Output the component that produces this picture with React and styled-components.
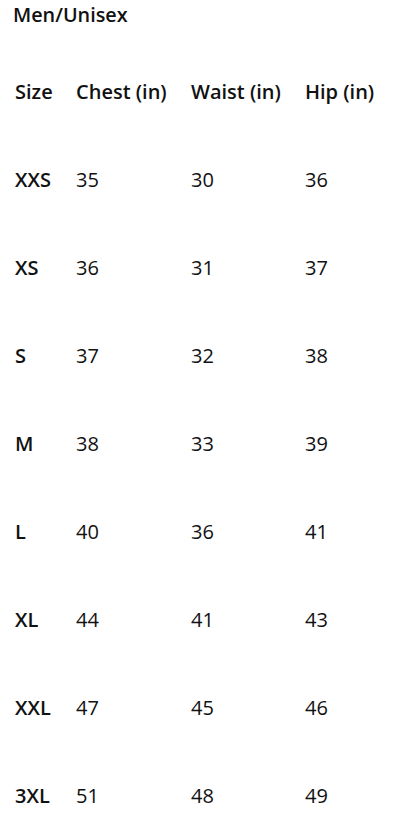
import styled, { createGlobalStyle } from "styled-components";

const GlobalStyle = createGlobalStyle`
  body {
    margin: 0;
    background: #ffffff;
    font-family: "Open Sans", "Noto Sans", sans-serif;
    color: #111111;
  }
`;

const sizes = [
  { size: "XXS", chest: 35, waist: 30, hip: 36 },
  { size: "XS", chest: 36, waist: 31, hip: 37 },
  { size: "S", chest: 37, waist: 32, hip: 38 },
  { size: "M", chest: 38, waist: 33, hip: 39 },
  { size: "L", chest: 40, waist: 36, hip: 41 },
  { size: "XL", chest: 44, waist: 41, hip: 43 },
  { size: "XXL", chest: 47, waist: 45, hip: 46 },
  { size: "3XL", chest: 51, waist: 48, hip: 49 },
];

const App = () => {
  return (
    <>
      <GlobalStyle />
      <Wrapper>
        <Title>Men/Unisex</Title>
        <Table>
          <colgroup>
            <col style={{ width: 61 }} />
            <col style={{ width: 115 }} />
            <col style={{ width: 114 }} />
            <col />
          </colgroup>
          <thead>
            <Row>
              <HeadCell>Size</HeadCell>
              <HeadCell>Chest (in)</HeadCell>
              <HeadCell>Waist (in)</HeadCell>
              <HeadCell>Hip (in)</HeadCell>
            </Row>
          </thead>
          <tbody>
            {sizes.map((s) => (
              <Row key={s.size}>
                <HeadCell as="td">{s.size}</HeadCell>
                <Cell>{s.chest}</Cell>
                <Cell>{s.waist}</Cell>
                <Cell>{s.hip}</Cell>
              </Row>
            ))}
          </tbody>
        </Table>
      </Wrapper>
    </>
  );
};

const Wrapper = styled.div`
  padding: 2px 0 0 13px;
`;

const Title = styled.h2`
  margin: 0;
  font-size: 19.8px;
  line-height: 26px;
  font-weight: 600;
`;

const Table = styled.table`
  border-collapse: collapse;
  table-layout: fixed;
  width: 390px;
  margin-top: 19px;
  margin-left: 2px;
`;

const Row = styled.tr`
  height: 88px;
`;

const HeadCell = styled.th`
  padding: 0;
  text-align: left;
  vertical-align: middle;
  font-size: 20px;
  font-weight: 600;
  white-space: nowrap;
`;

const Cell = styled.td`
  padding: 0;
  text-align: left;
  vertical-align: middle;
  font-size: 20px;
  font-weight: 400;
`;

export default App;
